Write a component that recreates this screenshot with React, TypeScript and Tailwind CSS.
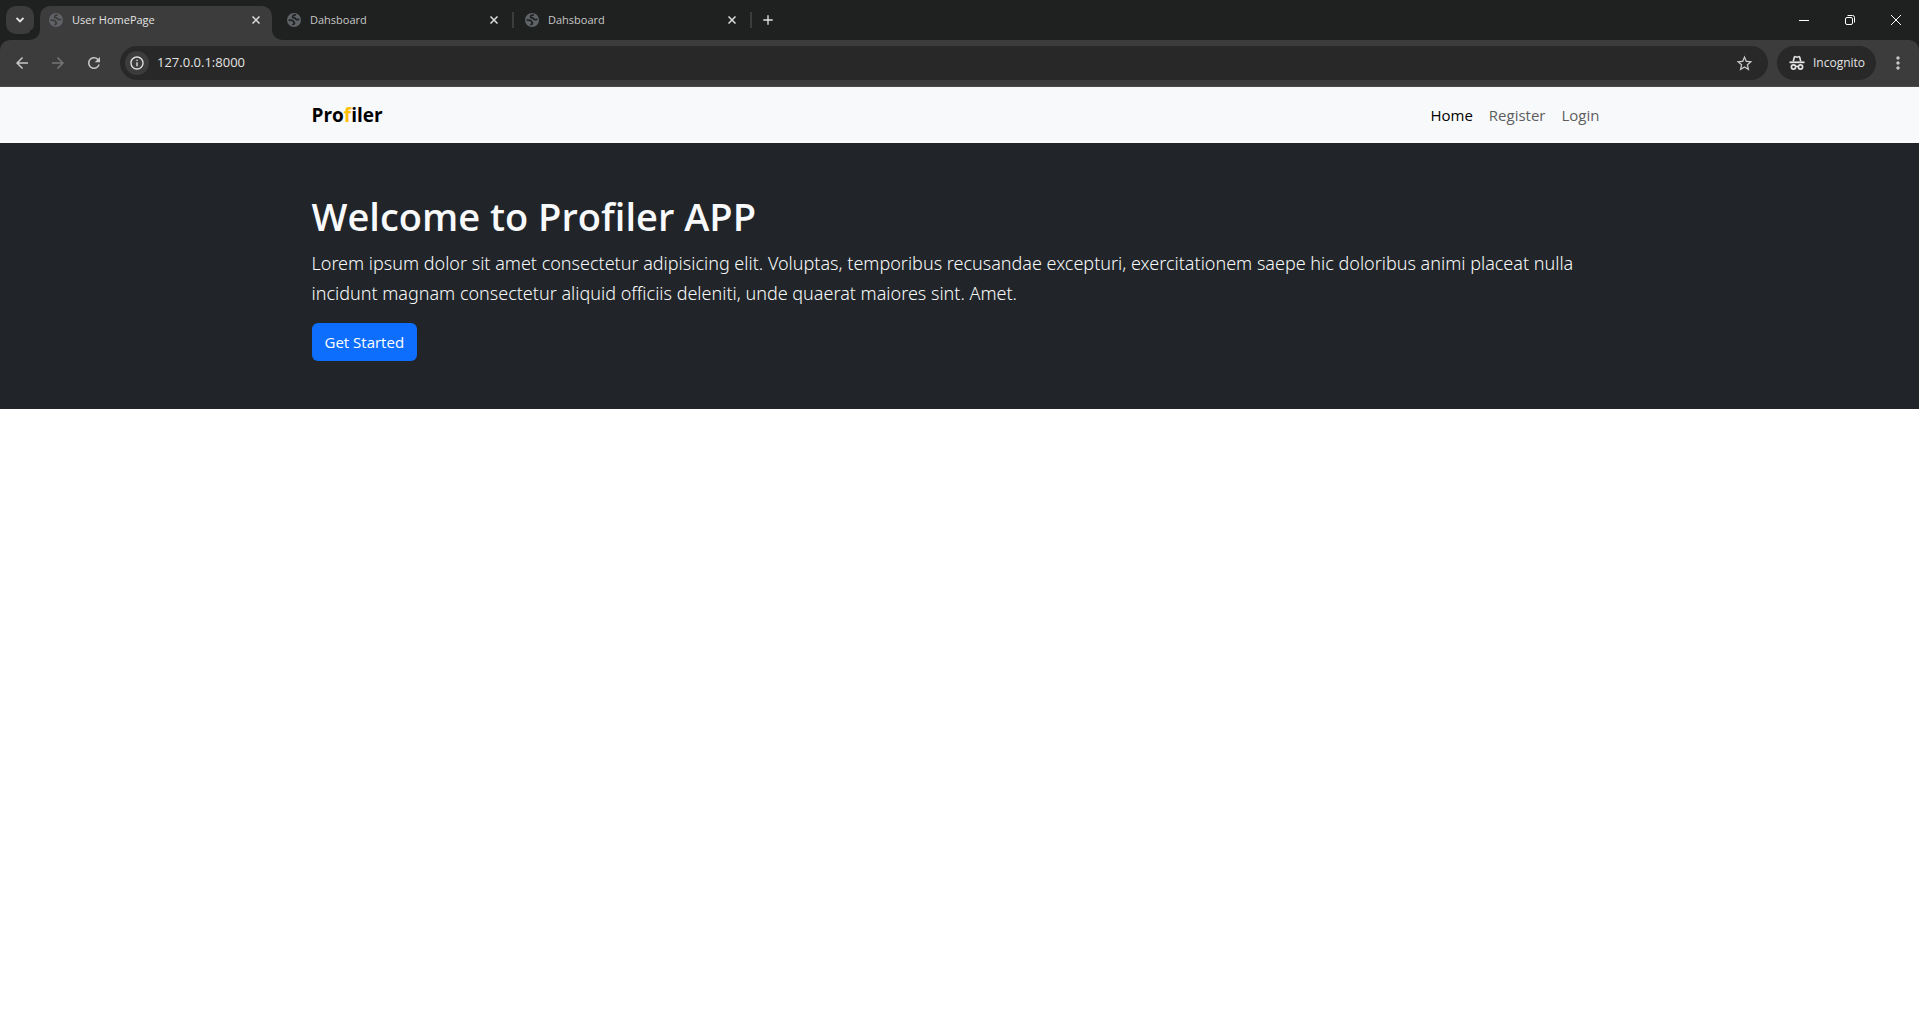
import React from "react";
import { MdArrowBack, MdArrowForward, MdRefresh, MdInfoOutline, MdStarOutline, MdMoreVert, MdAdd } from "react-icons/md";

function Globe() {
  return (
    <svg viewBox="0 0 14 14" className="size-[14px] shrink-0" aria-hidden="true">
      <circle cx="7" cy="7" r="7" fill="#5f6368" />
      <path
        d="M8.800 1.800C7 1.900 5.400 2.600 5.500 4c.1 1.200 1.500.7 2.500 1.100.9.400.6 1.300 1.500 1.600.9.200 1.600-.4 2.900-.2M1.600 7.200c1.600-.3 3.200-.2 4.400.5 1 .7.300 1.300 1.200 1.900.7.500.2 1.200-.5 1.500-.6.300-.8.600-.8 1.200"
        fill="none"
        stroke="currentColor"
        strokeWidth="1.700"
      />
    </svg>
  );
}

function Incognito() {
  return (
    <svg viewBox="0 0 16 16" className="size-4" fill="none" stroke="currentColor" aria-hidden="true">
      <path d="M4.200 6.500 5.300 2.300q.3-.9 1.100-.6l1.600.5 1.600-.5q.8-.3 1.100.6l1.100 4.200" strokeWidth="1.600" />
      <path d="M.5 7.300h15" strokeWidth="1.800" />
      <circle cx="4.500" cy="12" r="2.100" strokeWidth="1.700" />
      <circle cx="11.500" cy="12" r="2.100" strokeWidth="1.700" />
      <path d="M6.500 11.600q1.500-.9 3 0" strokeWidth="1.500" />
    </svg>
  );
}

function Tab({ title, active = false }: { title: string; active?: boolean }) {
  return (
    <div
      className={
        active
          ? "relative flex h-[34px] w-[232px] items-center gap-[9px] rounded-t-[10px] bg-[#3c3c3c] pr-2 pb-[6px] pl-[9px] text-[#3c3c3c]"
          : "relative flex h-[34px] w-[232px] items-center gap-[9px] pr-2 pb-[6px] pl-[9px] text-[#1f2120]"
      }
    >
      {active && (
        <>
          <span className="absolute right-full bottom-0 size-[10px] bg-[#3c3c3c]">
            <span className="block size-full rounded-br-[10px] bg-[#1f2120]" />
          </span>
          <span className="absolute bottom-0 left-full size-[10px] bg-[#3c3c3c]">
            <span className="block size-full rounded-bl-[10px] bg-[#1f2120]" />
          </span>
        </>
      )}
      <Globe />
      <span className={active ? "grow text-[11px] text-[#e3e3e3]" : "grow text-[11px] text-[#c7c7c7]"}>{title}</span>
      <button type="button" aria-label={`Close ${title}`} className="grid size-4 place-items-center text-[#dddddd]">
        <svg viewBox="0 0 8 8" className="size-2" stroke="currentColor" strokeWidth="1.500">
          <path d="m.5.5 7 7M7.500.5l-7 7" />
        </svg>
      </button>
    </div>
  );
}

function BrowserChrome() {
  return (
    <header className="bg-[#1f2120] text-[#e3e3e3]">
      <div className="flex h-10">
        <button type="button" aria-label="Search tabs" className="mt-[6px] ml-[6px] grid size-7 place-items-center rounded-[10px] bg-[#3c3c3c]">
          <svg viewBox="0 0 8 6" className="h-[6px] w-2" fill="none" stroke="currentColor" strokeWidth="1.800">
            <path d="m.6 1 3.400 3.400L7.400 1" />
          </svg>
        </button>
        <div className="ml-[6px] flex items-end">
          <Tab title="User HomePage" active />
          <span className="w-[6px]" />
          <Tab title="Dahsboard" />
          <span className="mx-[2px] mb-3 h-4 w-[2px] bg-[#3c3c3c]" />
          <Tab title="Dahsboard" />
          <span className="mx-[2px] mb-3 h-4 w-[2px] bg-[#3c3c3c]" />
        </div>
        <button type="button" aria-label="New tab" className="grid size-7 self-center place-items-center">
          <MdAdd className="size-4" />
        </button>
        <div className="ml-auto flex text-white">
          <button type="button" aria-label="Minimize" className="grid w-[46px] place-items-center">
            <svg viewBox="0 0 10 10" className="size-[10px]" stroke="currentColor"><path d="M0 5.500h10" /></svg>
          </button>
          <button type="button" aria-label="Restore" className="grid w-[46px] place-items-center">
            <svg viewBox="0 0 10 10" className="size-[10px]" stroke="currentColor" fill="none">
              <rect x=".5" y="2.500" width="7" height="7" rx="1.500" />
              <path d="M2.500.5H7.500a2 2 0 0 1 2 2v5" />
            </svg>
          </button>
          <button type="button" aria-label="Close window" className="grid w-[46px] place-items-center">
            <svg viewBox="0 0 10 10" className="size-[10px]" stroke="currentColor"><path d="m0 0 10 10M10 0 0 10" /></svg>
          </button>
        </div>
      </div>
      <div className="flex h-[47px] items-center rounded-t-[10px] border-b border-[#4a4a4a] bg-[#3c3c3c] pl-1">
        <button type="button" aria-label="Back" className="grid h-8 w-9 place-items-center text-[#c7c7c7]">
          <MdArrowBack className="size-[18px]" />
        </button>
        <button type="button" aria-label="Forward" disabled className="grid h-8 w-9 place-items-center text-[#757575]">
          <MdArrowForward className="size-[18px]" />
        </button>
        <button type="button" aria-label="Reload" className="grid h-8 w-9 place-items-center text-[#c7c7c7]">
          <MdRefresh className="size-[18px]" />
        </button>
        <div className="ml-2 flex h-[34px] grow items-center rounded-full bg-[#282828] pr-[14px] pl-[5px]">
          <button type="button" aria-label="Site information" className="grid size-6 place-items-center rounded-full bg-[#3c3c3c]">
            <MdInfoOutline className="size-4" />
          </button>
          <input
            aria-label="Address"
            defaultValue="127.0.0.1:8000"
            className="ml-2 min-w-0 grow bg-transparent text-[13px] text-[#e3e3e3] outline-none"
          />
          <button type="button" aria-label="Bookmark" className="text-[#c7c7c7]">
            <MdStarOutline className="size-[19px]" />
          </button>
        </div>
        <button type="button" className="ml-[9px] flex h-[34px] w-[99px] items-center gap-2 rounded-full bg-[#282828] pl-3 text-[12px]">
          <Incognito />
          Incognito
        </button>
        <button type="button" aria-label="Menu" className="mr-[11px] ml-[12px] grid size-5 place-items-center text-[#c7c7c7]">
          <MdMoreVert className="size-5" />
        </button>
      </div>
    </header>
  );
}

export default function App() {
  return (
    <div className="min-h-screen bg-white font-['Open_Sans',sans-serif] [font-variant-ligatures:none]">
      <BrowserChrome />
      <nav className="h-14 bg-[#f8f9fa]">
        <div className="mx-auto flex h-full max-w-[1320px] items-center justify-between px-3 pt-px">
          <a href="#" className="text-[19px] font-bold text-black">
            Pro<span className="text-[#ffc107]">f</span>iler
          </a>
          <div className="flex gap-4 pr-2 text-[15px] text-[#5d5e5f]">
            <a href="#" className="text-black">Home</a>
            <a href="#">Register</a>
            <a href="#">Login</a>
          </div>
        </div>
      </nav>
      <main>
        <section className="bg-[#212529] pt-[49px] pb-12 text-[#f8f9fa]">
          <div className="mx-auto max-w-[1320px] px-3">
            <h1 className="mb-2 text-[38px] leading-[48px] font-semibold">Welcome to Profiler APP</h1>
            <p className="mb-[15px] font-['Noto_Sans',sans-serif] text-[18px] leading-[30px] font-light">
              Lorem ipsum dolor sit amet consectetur adipisicing elit. Voluptas, temporibus recusandae excepturi,
              exercitationem saepe hic doloribus animi placeat nulla incidunt magnam consectetur aliquid officiis
              deleniti, unde quaerat maiores sint. Amet.
            </p>
            <a href="#" className="inline-flex h-[38px] items-center rounded-md bg-[#0d6efd] px-[13px] text-[15px] text-white align-top">
              Get Started
            </a>
          </div>
        </section>
      </main>
    </div>
  );
}
